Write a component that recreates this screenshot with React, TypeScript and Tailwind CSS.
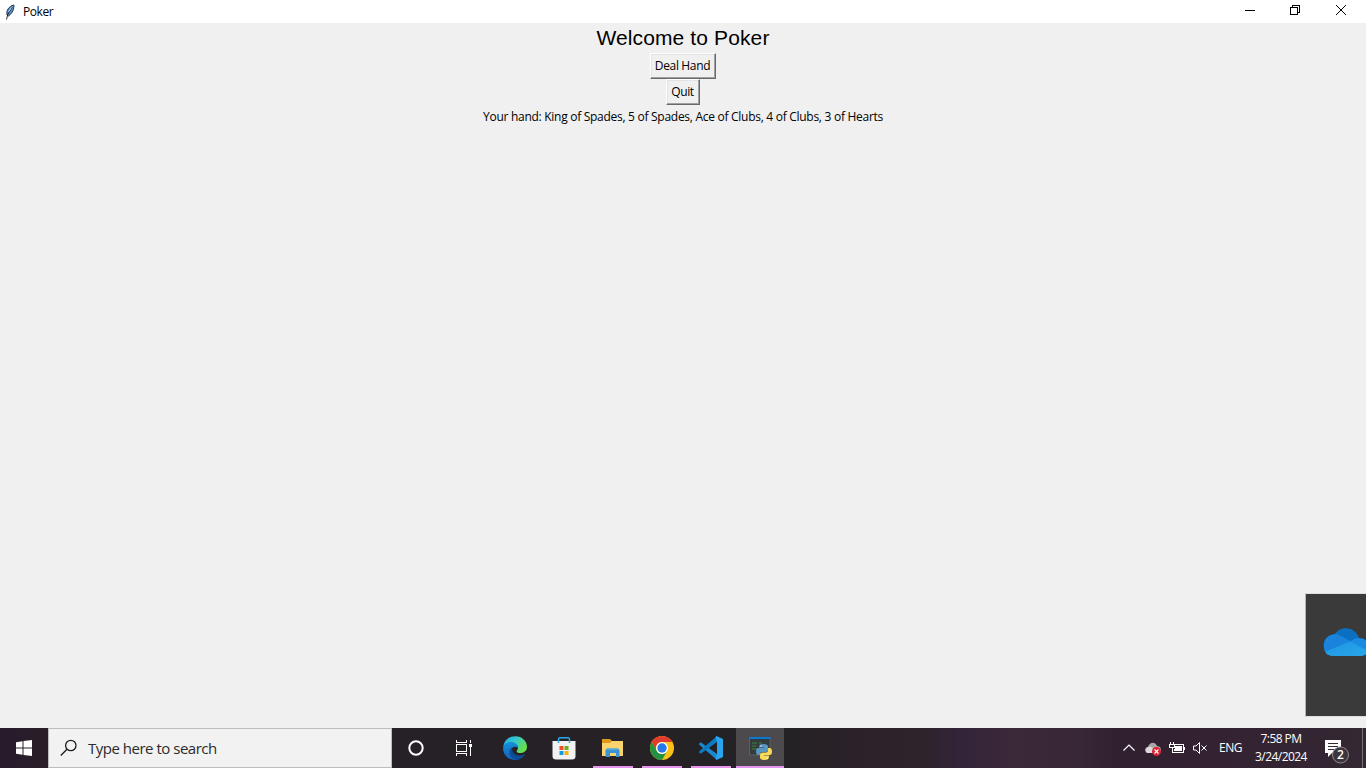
import React from "react";

type SlotProps = { children: React.ReactNode; open?: boolean };

function AppSlot({ children, open }: SlotProps) {
  return (
    <div className="relative flex h-10 w-[49px] items-center justify-center">
      {children}
      {open && <span className="absolute bottom-0 left-[5px] h-[2px] w-10 bg-[#e794ee]" />}
    </div>
  );
}

function Feather() {
  return (
    <svg width="12" height="18" viewBox="0 0 12 18">
      <path d="M3 12C2.200 7.500 4.500 3.500 9.800 2C10.200 5.500 8.700 10 4.500 13Z" fill="#5b93d6" stroke="#25303a" strokeWidth="1" />
      <path d="M2.500 16.500L3.800 11.500L8 4.500" fill="none" stroke="#101820" strokeWidth=".9" />
      <path d="M4.500 9L7.500 4.500" stroke="#b7d7f2" strokeWidth=".9" />
    </svg>
  );
}

function TitleBar() {
  return (
    <header className="flex h-[23px] shrink-0 items-center bg-white">
      <div className="flex h-full flex-1 items-center pl-1">
        <Feather />
        <span className="ml-[7px] text-[12px] leading-[23px] tracking-[-0.45px]">Poker</span>
      </div>
      <svg width="146" height="23" viewBox="0 0 146 23" fill="none" stroke="#000" shapeRendering="crispEdges">
        <path d="M25 10.500H35" />
        <path d="M70.500 7.500H77.500V14.500H70.500ZM72.500 7V5.500H79.500V12.500H78" />
        <path d="M116 5L126 15M126 5L116 15" shapeRendering="geometricPrecision" strokeWidth="1" />
      </svg>
    </header>
  );
}

function OneDrive() {
  return (
    <aside className="absolute right-0 top-[593px] h-[124px] w-[61px] overflow-hidden border-y border-l border-y-[#dedede] border-l-[#b5b5b5] bg-[#3a3a3a]">
      <svg className="mt-[33px] ml-[17px]" width="46" height="31" viewBox="0 0 46 31">
        <defs>
          <clipPath id="cloud">
            <path d="M10 29C4.500 29 .8 25 .8 18.500C.8 12 5.500 7.500 12 7.200C17-1.200 32-1.200 36 11.200C42 11 46 15 46 20C46 25 42.500 29 37 29Z" />
          </clipPath>
          <linearGradient id="cloudBase" x1="0" y1="0" x2="1" y2="1">
            <stop stopColor="#1e95e4" /><stop offset="1" stopColor="#28a8ea" />
          </linearGradient>
        </defs>
        <g clipPath="url(#cloud)">
          <path d="M0 0H46V31H0Z" fill="#0b70c2" />
          <path d="M0 7C8 5 14 6.500 18 9L29 15L0 31Z" fill="#1a83dc" />
          <path d="M27 14.500C32 10.500 39 9 46 13V24L27 15Z" fill="#1a8be0" />
          <path d="M0 25.500L27 14.500L46 24V31H0Z" fill="url(#cloudBase)" />
        </g>
      </svg>
    </aside>
  );
}

function Edge() {
  return (
    <svg width="24" height="24" viewBox="0 0 24 24">
      <defs>
        <linearGradient id="edgeTop" x1="0" y1="0" x2="1" y2=".5">
          <stop stopColor="#25a9e2" /><stop offset=".5" stopColor="#32c9cd" /><stop offset="1" stopColor="#66e14b" />
        </linearGradient>
        <linearGradient id="edgeSide" x1="0" y1="0" x2="0" y2="1">
          <stop stopColor="#168fdc" /><stop offset="1" stopColor="#1162ba" />
        </linearGradient>
      </defs>
      <path d="M.3 11C1 4.200 6 .2 12.300 .2C19 .2 24 5 24 11C24 15 20.500 17 17 17C14 17 13 15.800 14 14.500C17 10.500 13 7 8.500 7C4.500 7 1.500 8.800 .3 11Z" fill="url(#edgeTop)" />
      <path d="M.1 12C.2 8.500 4 6 8 6C12.500 6 15 9 14.500 12C13.500 10.500 11 10 9 12C5.500 16 9 22.500 14 23.700C6 25 0 19 .1 12Z" fill="url(#edgeSide)" />
      <path d="M9.500 11C8 15 11 19.500 16 19.500C19 19.500 21 18.500 22.300 17.700C20.500 21.500 17 24 13 24C5.500 21.500 4.500 14.500 9.500 11Z" fill="#0c4d95" />
    </svg>
  );
}

function Store() {
  return (
    <svg width="24" height="24" viewBox="0 0 24 24">
      <path d="M.5 5H23.500V20Q23.500 23.500 20 23.500H4Q.5 23.500 .5 20Z" fill="#f1f1f1" />
      <path d="M6.500 7V3Q6.500 1.700 8 1.700H16Q17.500 1.700 17.500 3V7" fill="none" stroke="#28a9e8" strokeWidth="1.500" />
      <path d="M7.500 10H11.500V14H7.500Z" fill="#ef5124" /><path d="M12.500 10H16.500V14H12.500Z" fill="#70ad1f" />
      <path d="M7.500 15H11.500V19H7.500Z" fill="#119de1" /><path d="M12.500 15H16.500V19H12.500Z" fill="#f6b50c" />
    </svg>
  );
}

function Explorer() {
  return (
    <svg width="24" height="24" viewBox="0 0 24 24">
      <path d="M1 3H9L11 5H22V20H1Z" fill="#df9a18" />
      <path d="M1 7H9L11 5H22V20H1Z" fill="#fbd46e" />
      <path d="M4.500 21V14L6 12.500H17L18.500 14V21H15V17H9V21Z" fill="#3a93d3" />
      <path d="M6 12.500H17L18 14H5Z" fill="#55abdf" />
    </svg>
  );
}

function Chrome() {
  return (
    <svg width="24" height="24" viewBox="0 0 24 24">
      <circle cx="12" cy="12" r="12" fill="#fbc116" />
      <path d="M1.608 6A12 12 0 0 1 22.392 6H12A6 6 0 0 0 6.804 15Z" fill="#e33b2e" />
      <path d="M1.608 6A12 12 0 0 0 12 24L17.196 15A6 6 0 0 1 6.804 15Z" fill="#229342" />
      <circle cx="12" cy="12" r="6" fill="#fff" /><circle cx="12" cy="12" r="4.700" fill="#2878e8" />
    </svg>
  );
}

function Code() {
  return (
    <svg width="24" height="24" viewBox="0 0 24 24">
      <path d="M0 7.800L1.700 6.300L18 18V24L.3 8.800Z" fill="#168bd1" />
      <path d="M0 16.200L1.700 17.700L18 6V0L.3 15.200Z" fill="#0b7bc2" />
      <path d="M17.500 0L24 3V21L17.500 24L16.500 22.500L18 18V6L16.500 1.500Z" fill="#29a4ed" />
    </svg>
  );
}

function PythonWindow() {
  return (
    <svg width="24" height="24" viewBox="0 0 24 24">
      <path d="M1.500 1.500H22V19H1.500Z" fill="#353c40" stroke="#596167" />
      <path d="M1 1H22.500V3H1Z" fill="#0878d1" />
      <path d="M4 7H9M11 7H14M4 10H8M4 13H10" stroke="#386d3a" strokeWidth="1.500" />
      <path d="M11 12V10.500Q11 8 15.500 8Q20 8 20 10.500V14Q20 16 17.500 16H14Q12 16 12 18V19H10Q8 19 8 15.500Q8 12 10.500 12H16V11.500H11Z" fill="#5a96c2" />
      <path d="M20 12H21.500Q24 12 24 15.500Q24 19 21.500 19H16V19.500H21V21Q21 24 16.500 24Q12 24 12 21.500V18.500Q12 16.500 14.500 16.500H18Q20 16.500 20 14Z" fill="#f8da57" />
      <circle cx="13" cy="10" r=".8" fill="#e7edf1" /><circle cx="19" cy="22" r=".8" fill="#fff5be" />
    </svg>
  );
}

function TrayIcons() {
  return (
    <svg width="90" height="40" viewBox="0 0 90 40" fill="none" stroke="#fff">
      <path d="M3.500 22.500L9 17L14.500 22.500" strokeWidth="1.200" />
      <path d="M28 25C24 25 24 19 28 19C30 13 36 14 37 18C41 18 42 22 40 25Z" fill="#a9a6aa" stroke="none" />
      <path d="M26 22C26 19 29 18 31 19L38 23V25H28Q26 25 26 22Z" fill="#dedbdd" stroke="none" />
      <circle cx="36.500" cy="23.500" r="4.500" fill="#dc2334" stroke="none" />
      <path d="M34.500 21.500L38.500 25.500M38.500 21.500L34.500 25.500" strokeWidth="1.100" />
      <g shapeRendering="crispEdges">
        <path d="M50.500 14V17M53.500 14V17M49.500 16.500H54.500V19.500H49.500ZM52.500 20V24.500H63.500V16.500H55M64.500 19V22" />
        <path d="M55 18H62V23H54V21H55Z" fill="#fff" stroke="none" />
      </g>
      <path d="M73.500 18V22H76L79.500 25.500V14.500L76 18Z" />
      <path d="M81.500 17.500L86.500 22.500M86.500 17.500L81.500 22.500" />
    </svg>
  );
}

function Taskbar() {
  return (
    <footer className="flex h-10 shrink-0 bg-[linear-gradient(90deg,#281b2b_0px,#281f29_48px,#252126_392px,#262126_540px,#242224_784px,#2b2129_850px,#2d232a_920px,#33243a_960px,#3b2839_1010px,#382735_1080px,#302030_1120px,#342231_1220px,#332833_1366px)] text-white">
      <div className="flex w-12 items-center justify-center">
        <svg width="16" height="16" viewBox="0 0 16 16" fill="#fff">
          <path d="M0 2.200L6.500 1.300V7.500H0ZM7.500 1.100L16 0V7.500H7.500ZM0 8.500H6.500V14.700L0 13.800ZM7.500 8.500H16V16L7.500 14.900Z" />
        </svg>
      </div>
      <div className="flex h-10 w-[344px] items-center border border-[#bdbdbd] bg-[#f2f2f2] pl-[11px] text-[#2b2b2b]">
        <svg width="18" height="18" viewBox="0 0 18 18" fill="none" stroke="#1d1d1d" strokeWidth="1.300">
          <circle cx="10.800" cy="6.500" r="5.200" /><path d="M7 10.200L.8 16.500" />
        </svg>
        <span className="ml-[10px] text-[15px] tracking-[-0.49px]">Type here to search</span>
      </div>
      <div className="flex w-12 items-center justify-center">
        <svg width="16" height="16" viewBox="0 0 16 16"><circle cx="8" cy="8" r="6.700" fill="none" stroke="#fff" strokeWidth="2" /></svg>
      </div>
      <div className="flex w-[50px] items-center pl-4">
        <svg width="17" height="16" viewBox="0 0 17 16" fill="none" stroke="#fff" shapeRendering="crispEdges">
          <path d="M.5 0V2.500H10.500V0M.5 4.500H10.500V11.500H.5ZM.5 16V13.500H10.500V16M14.500 0V3M14.500 7V16" />
          <path d="M13 4H16V7H13Z" fill="#fff" stroke="none" />
        </svg>
      </div>
      <AppSlot><Edge /></AppSlot>
      <AppSlot><Store /></AppSlot>
      <AppSlot open><Explorer /></AppSlot>
      <AppSlot open><Chrome /></AppSlot>
      <AppSlot open><Code /></AppSlot>
      <div className="ml-px flex h-10 w-12 items-center justify-center border-b-2 border-[#e794ee] bg-[#4c4a4c] pt-[2px]"><PythonWindow /></div>
      <div className="ml-auto flex w-[246px]">
        <TrayIcons />
        <span className="ml-[9px] w-[30px] whitespace-nowrap text-[12px] leading-10 tracking-[-0.5px]">ENG</span>
        <div className="w-[64px] pt-[2px] text-center text-[12px] leading-[18px] tracking-[-0.55px]">
          <p>7:58 PM</p>
          <p>3/24/2024</p>
        </div>
        <div className="relative ml-[11px] h-10 w-[37px]">
          <svg width="37" height="40" viewBox="0 0 37 40">
            <path d="M1 12H17V25H8L4 29V25H1Z" fill="#fff" />
            <path d="M4 15.500H14M4 18.500H14M4 21.500H10" stroke="#382b38" />
            <circle cx="16.500" cy="27" r="8" fill="#3c353b" stroke="#918c91" />
          </svg>
          <span className="absolute left-[9px] top-[19px] w-[15px] text-center text-[12px] font-semibold leading-4">2</span>
        </div>
        <span className="ml-px h-10 w-px bg-[#787078]" />
      </div>
    </footer>
  );
}

function TkButton({ children, className }: { children: string; className: string }) {
  return (
    <button className={`h-[26px] whitespace-nowrap border border-t-white border-l-white border-r-[#696969] border-b-[#696969] bg-[#f0f0f0] pr-px pb-px text-[12px] leading-[22px] shadow-[inset_-1px_-1px_0_#a0a0a0,inset_1px_1px_0_#e3e3e3] ${className}`}>
      {children}
    </button>
  );
}

export default function App() {
  return (
    <div className="relative flex h-[768px] w-[1366px] flex-col overflow-hidden bg-[#f0f0f0] font-['Open_Sans','Noto_Sans',sans-serif] text-black">
      <TitleBar />
      <main className="flex flex-1 flex-col items-center">
        <h1 className="h-[30px] whitespace-nowrap font-['Liberation_Sans',sans-serif] text-[21px] leading-[30px] tracking-[0.12px]">Welcome to Poker</h1>
        <TkButton className="w-[66px] tracking-[-0.35px]">Deal Hand</TkButton>
        <TkButton className="w-[34px] tracking-[-0.35px]">Quit</TkButton>
        <p className="whitespace-nowrap text-[12px] leading-[23px] tracking-[-0.28px]">Your hand: King of Spades, 5 of Spades, Ace of Clubs, 4 of Clubs, 3 of Hearts</p>
      </main>
      <OneDrive />
      <Taskbar />
    </div>
  );
}
